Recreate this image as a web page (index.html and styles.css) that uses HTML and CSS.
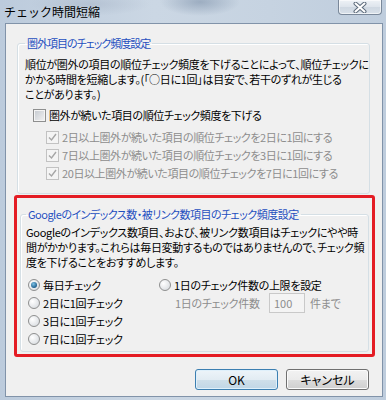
FILE: index.html
```html
<!DOCTYPE html>
<html>

<head>
    <meta content="text/html; charset=utf-8" http-equiv="Content-Type">
    <title>チェック時間短縮</title>

    <link rel="stylesheet" href="styles.css">
</head>

<body>

    <div class="window">
        <div class="titlebar">
            <span class="title">チェック時間短縮</span>
            <div class="closeButton">
                <svg width="14" height="11" viewBox="0 0 14 11">
                    <path d="M2.5 1.5 L11.5 9.5 M11.5 1.5 L2.5 9.5" stroke="#5d6b7b" stroke-width="4" stroke-linecap="round" fill="none"/>
                    <path d="M2.5 1.5 L11.5 9.5 M11.5 1.5 L2.5 9.5" stroke="#ffffff" stroke-width="2" stroke-linecap="round" fill="none"/>
                </svg>
            </div>
        </div>

        <div class="client">
            <fieldset class="groupBox outGroup">
                <legend>圏外項目のチェック頻度設定</legend>
                <p class="desc">順位が圏外の項目の順位チェック頻度を下げることによって、順位チェックに<br>かかる時間を短縮します。(「○日に1回」は目安で、若干のずれが生じる<br>ことがあります。)</p>
                <div class="checkRow mainCheck"><span class="checkBox"></span>圏外が続いた項目の順位チェック頻度を下げる</div>
                <div class="subChecks">
                    <div class="checkRow disabled"><span class="checkBox checked"><svg width="11" height="11" viewBox="0 0 11 11"><path d="M2 5.5 L4.5 8 L9 2" stroke="#a6a6a6" stroke-width="1.4" fill="none"/></svg></span>2日以上圏外が続いた項目の順位チェックを2日に1回にする</div>
                    <div class="checkRow disabled"><span class="checkBox checked"><svg width="11" height="11" viewBox="0 0 11 11"><path d="M2 5.5 L4.5 8 L9 2" stroke="#a6a6a6" stroke-width="1.4" fill="none"/></svg></span>7日以上圏外が続いた項目の順位チェックを3日に1回にする</div>
                    <div class="checkRow disabled"><span class="checkBox checked"><svg width="11" height="11" viewBox="0 0 11 11"><path d="M2 5.5 L4.5 8 L9 2" stroke="#a6a6a6" stroke-width="1.4" fill="none"/></svg></span>20日以上圏外が続いた項目の順位チェックを7日に1回にする</div>
                </div>
            </fieldset>

            <div class="highlight">
                <fieldset class="groupBox googleGroup">
                    <legend>Googleのインデックス数・被リンク数項目のチェック頻度設定</legend>
                    <p class="desc">Googleのインデックス数項目、および、被リンク数項目はチェックにやや時<br>間がかかります。これらは毎日変動するものではありませんので、チェック頻<br>度を下げることをおすすめします。</p>
                    <div class="options">
                        <div class="optionCol">
                            <div class="radioRow"><span class="radio checked"></span>毎日チェック</div>
                            <div class="radioRow"><span class="radio"></span>2日に1回チェック</div>
                            <div class="radioRow"><span class="radio"></span>3日に1回チェック</div>
                            <div class="radioRow"><span class="radio"></span>7日に1回チェック</div>
                        </div>
                        <div class="optionCol limitCol">
                            <div class="radioRow"><span class="radio"></span>1日のチェック件数の上限を設定</div>
                            <div class="limitRow">
                                <span class="limitLabel">1日のチェック件数</span>
                                <span class="numBox">100</span>
                                <span>件まで</span>
                            </div>
                        </div>
                    </div>
                </fieldset>
            </div>

            <div class="buttons">
                <button class="dlgButton defaultButton">OK</button>
                <button class="dlgButton">キャンセル</button>
            </div>
        </div>
    </div>

</body>

</html>
```

FILE: styles.css
```css
body {
    margin: 0;
    width: 386px;
    height: 400px;
    overflow: hidden;
    font-family: "Noto Sans CJK JP", sans-serif;
    font-size: 11px;
    color: #000000;
    background:
        radial-gradient(ellipse 40px 14px at 200px 2px, rgba(120, 140, 165, 0.55), rgba(120, 140, 165, 0)),
        radial-gradient(ellipse 60px 12px at 90px 4px, rgba(150, 165, 185, 0.35), rgba(150, 165, 185, 0)),
        linear-gradient(90deg, #bccbdc 0%, #cbd7e4 40%, #c6d3e1 70%, #bfcddd 100%);
}

.window {
    display: flex;
    flex-direction: column;
    height: 400px;
}

.titlebar {
    height: 23px;
    display: flex;
    justify-content: space-between;
    align-items: flex-start;
}

.title {
    padding-left: 4px;
    line-height: 23px;
    font-size: 12px;
}

.closeButton {
    width: 42px;
    height: 14px;
    margin-right: 4px;
    border: 1px solid #7a889a;
    border-top: none;
    border-radius: 0 0 4px 4px;
    background: linear-gradient(#eef2f6, #dde4ec 50%, #cfd8e2 51%, #d8e0e9);
    box-shadow: inset 0 0 0 1px rgba(255, 255, 255, 0.6);
    display: flex;
    align-items: center;
    justify-content: center;
}

.client {
    flex: 1;
    margin: 0 3px 3px 5px;
    border: 1px solid #8193a9;
    background: #f0f0f0;
    display: flex;
    flex-direction: column;
}

.groupBox {
    margin: 0;
    min-width: 0;
    border: 1px solid #d5dfe5;
    border-radius: 3px;
    box-shadow: inset 1px 1px 0 #ffffff;
}

.groupBox legend {
    padding: 0 2px;
    line-height: 14px;
    color: #1f4fbf;
    white-space: nowrap;
    font-feature-settings: "palt";
    letter-spacing: -0.5px;
}

.outGroup legend {
    letter-spacing: -1px;
}

.desc {
    margin: 0;
    line-height: 15px;
    white-space: nowrap;
    font-feature-settings: "palt";
    letter-spacing: -0.3px;
}

.outGroup {
    margin: 12px 12px 0 11px;
    padding: 7px 7px 11px 7px;
}

.checkRow {
    display: flex;
    align-items: center;
    gap: 3px;
    height: 18px;
    white-space: nowrap;
    font-feature-settings: "palt";
    letter-spacing: -0.4px;
}

.mainCheck {
    margin-top: 4px;
    padding-left: 8px;
}

.subChecks {
    padding-top: 4px;
    padding-left: 21px;
}

.checkBox {
    box-sizing: border-box;
    width: 13px;
    height: 13px;
    flex: none;
    border: 1px solid #8e8f8f;
    background: linear-gradient(135deg, #c4c9cf, #f2f2f3);
    box-shadow: inset 0 0 0 1px #f4f4f4;
    display: flex;
    align-items: center;
    justify-content: center;
}

.disabled {
    color: #8d8d8d;
}

.disabled .checkBox {
    border-color: #c2c2c2;
    background: #f4f4f4;
    box-shadow: none;
}

.highlight {
    margin: 1px 7px 0 8px;
    padding: 9px 3px 2px 3px;
    border: 3px solid #e41c24;
    border-radius: 3px;
}

.googleGroup {
    padding: 4px 5px 3px 5px;
}

.options {
    margin-top: 6px;
    display: grid;
    grid-template-columns: 131px 1fr;
}

.radioRow {
    display: flex;
    align-items: center;
    gap: 3px;
    height: 18px;
    padding-left: 2px;
    white-space: nowrap;
    font-feature-settings: "palt";
    letter-spacing: -0.3px;
}

.radio {
    box-sizing: border-box;
    width: 12px;
    height: 12px;
    flex: none;
    border: 1px solid #8e8f8f;
    border-radius: 50%;
    background: radial-gradient(circle at 35% 35%, #ffffff, #d2d6db);
    display: flex;
    align-items: center;
    justify-content: center;
}

.radio.checked::after {
    content: "";
    width: 6px;
    height: 6px;
    border-radius: 50%;
    background: radial-gradient(circle at 40% 35%, #7fc3e6, #1e5f8e 70%);
}

.limitRow {
    display: flex;
    align-items: center;
    height: 18px;
    padding-left: 18px;
    color: #8d8d8d;
    white-space: nowrap;
    font-feature-settings: "palt";
    letter-spacing: -0.3px;
}

.limitLabel {
    width: 94px;
}

.numBox {
    box-sizing: border-box;
    width: 36px;
    height: 20px;
    margin-right: 5px;
    padding-left: 4px;
    line-height: 18px;
    border: 1px solid #c9c9c9;
    background: #f4f4f4;
    color: #8d8d8d;
    letter-spacing: 0;
}

.buttons {
    margin: 12px 13px 0 0;
    display: flex;
    justify-content: flex-end;
    gap: 8px;
}

.dlgButton {
    box-sizing: border-box;
    width: 83px;
    height: 21px;
    padding: 0;
    border: 1px solid #707070;
    border-radius: 3px;
    background: linear-gradient(#f2f2f2 0%, #ebebeb 50%, #dddddd 51%, #cfcfcf 100%);
    box-shadow: inset 0 0 0 1px #fbfbfb;
    font-family: "Noto Sans CJK JP", sans-serif;
    font-size: 12px;
    color: #000000;
    font-feature-settings: "palt";
}

.defaultButton {
    border-color: #3c7fb1;
    background: linear-gradient(#edf4f9 0%, #e2ecf3 50%, #cfdfea 51%, #c0d6e6 100%);
    box-shadow: inset 0 0 0 1px #dff0fb;
}
```
